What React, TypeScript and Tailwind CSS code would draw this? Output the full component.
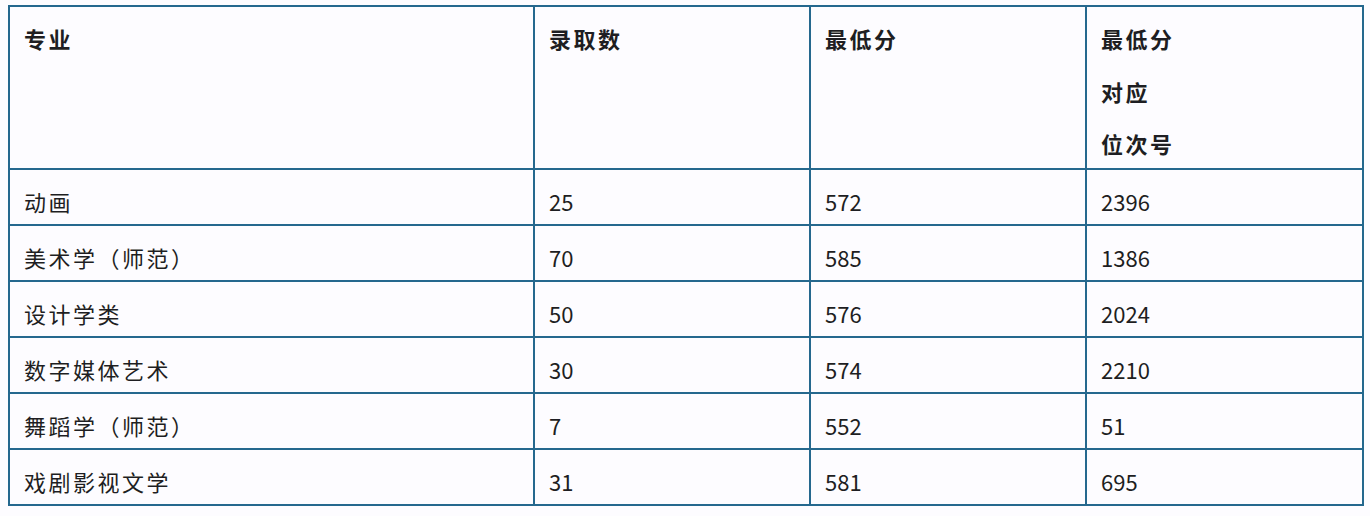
import React from "react";

const rows: [string, string, string, string][] = [
  ["动画", "25", "572", "2396"],
  ["美术学（师范）", "70", "585", "1386"],
  ["设计学类", "50", "576", "2024"],
  ["数字媒体艺术", "30", "574", "2210"],
  ["舞蹈学（师范）", "7", "552", "51"],
  ["戏剧影视文学", "31", "581", "695"],
];

export default function App() {
  return (
    <div
      className="w-[1370px] h-[516px] bg-[#fdfcff] pl-[8px] pt-[5px] text-[#1e1e22]"
      style={{ fontFamily: '"Noto Sans CJK SC", "Noto Sans", sans-serif' }}
    >
      <table className="w-[1354px] border-collapse border-2 border-[#25688e] table-fixed">
        <colgroup>
          <col className="w-[525px]" />
          <col className="w-[276px]" />
          <col className="w-[276px]" />
          <col className="w-[277px]" />
        </colgroup>
        <thead>
          <tr className="h-[162px]">
            {["专业", "录取数", "最低分"].map((h) => (
              <th
                key={h}
                className="border-2 border-[#25688e] align-top text-left font-bold text-[22px] leading-[53px] tracking-[2.5px] pl-[14px] pt-[5px] pb-0"
              >
                {h}
              </th>
            ))}
            <th className="border-2 border-[#25688e] align-top text-left font-bold text-[22px] leading-[53px] tracking-[2.5px] pl-[14px] pt-[5px] pb-0">
              <div>最低分</div>
              <div>对应</div>
              <div className="leading-[50px]">位次号</div>
            </th>
          </tr>
        </thead>
        <tbody>
          {rows.map((r) => (
            <tr key={r[0]} className="h-[56px]">
              {r.map((c, i) => (
                <td
                  key={i}
                  className={
                    i === 0
                      ? "border-2 border-[#25688e] align-middle text-[22px] leading-[28px] tracking-[2.5px] pl-[14px] pt-[8px] pb-0 font-normal"
                      : "border-2 border-[#25688e] align-middle text-[22px] leading-[28px] pl-[14px] pt-[8px] pb-0 font-normal"
                  }
                >
                  {c}
                </td>
              ))}
            </tr>
          ))}
        </tbody>
      </table>
    </div>
  );
}
